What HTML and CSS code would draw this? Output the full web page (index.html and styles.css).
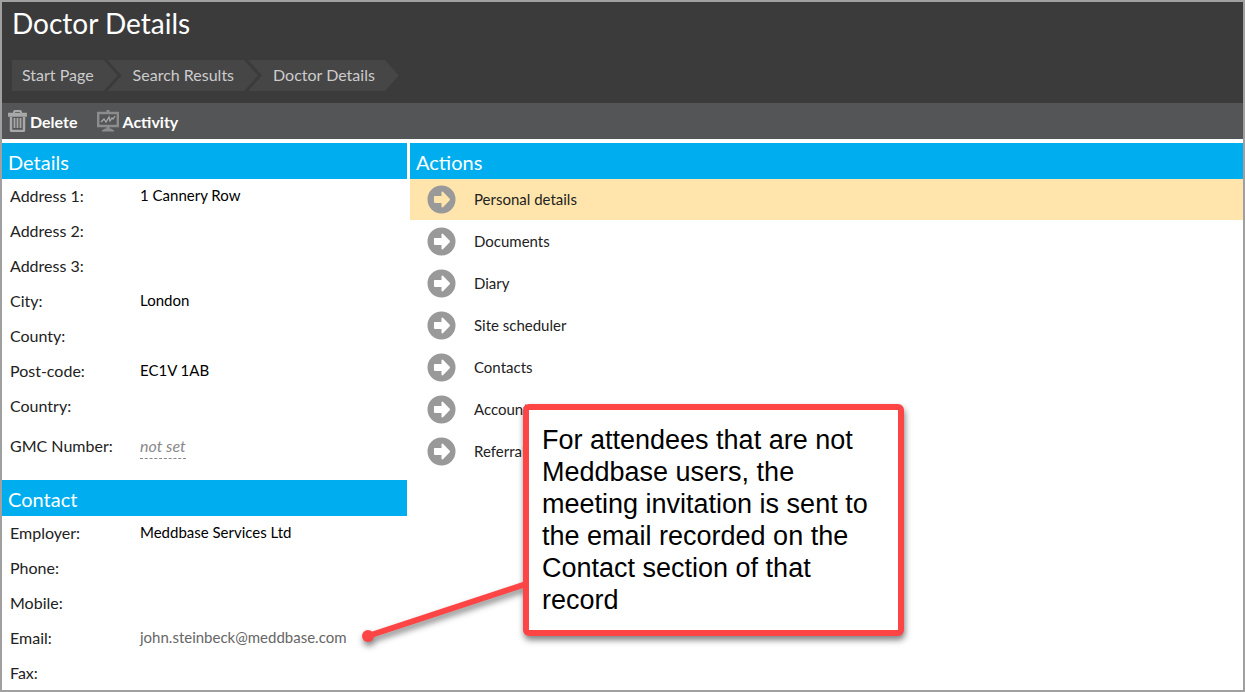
FILE: index.html
```
<!DOCTYPE html>
<html lang="en">
<head>
  <meta charset="UTF-8">
  <meta name="viewport" content="width=device-width, initial-scale=1.0">
  <title>Doctor Details</title>
  <link rel="stylesheet" href="styles.css">
</head>
<body>
  <svg class="symbols" aria-hidden="true">
    <symbol id="arrow" viewBox="0 0 30 30">
      <path fill="#999" fill-rule="evenodd" d="M15 .5a14.500 14.500 0 1 0 0 29a14.500 14.500 0 1 0 0-29zM8 11.500h7V7.500q.5-1 1.500-.5l7 7.200q.6.800 0 1.600l-7 7.200q-1 .5-1.500-.5v-4H8q-.8 0-.8-.8v-5.400q0-.8.800-.8z"/>
    </symbol>
  </svg>

  <div class="page">
    <header class="header">
      <h1>Doctor Details</h1>
      <nav class="breadcrumb">
        <a href="#">Start Page</a>
        <a href="#">Search Results</a>
        <a href="#">Doctor Details</a>
      </nav>
    </header>

    <div class="toolbar">
      <button type="button" class="tool">
        <svg width="19" height="22" viewBox="0 0 19 22" fill="none" stroke="#a8a8a9">
          <path d="M6 3V2q0-1 1-1h5q1 0 1 1v1" stroke-width="2"/>
          <path d="M.8 3.500h17.400v2.500H.8z" fill="#a8a8a9" stroke-width="1.500"/>
          <path d="M3 7v13q0 1 1 1h11q1 0 1-1V7" stroke-width="2.500"/>
          <path d="M6.500 8v10M9.500 8v10M12.500 8v10" stroke-width="1.800"/>
        </svg>
        Delete
      </button>
      <button type="button" class="tool">
        <svg width="22" height="22" viewBox="0 0 22 22" fill="none" stroke="#8c8c8d">
          <path d="M11 0v2M11 16v4" stroke-width="3"/>
          <path d="M1.200 3h19.600v13H1.200z" stroke-width="2.400"/>
          <path d="M5 21l3-2h6l3 2z" fill="#8c8c8d"/>
          <path d="M4 12l3-3 2 3 3-5 1 4 2-3 1 1 2-3" stroke="#a8a8a8" stroke-width="1.300"/>
        </svg>
        Activity
      </button>
    </div>

    <main class="content">
      <div class="left">
        <section class="panel">
          <h2>Details</h2>
          <dl class="fields">
            <div class="field"><dt>Address 1:</dt><dd>1 Cannery Row</dd></div>
            <div class="field"><dt>Address 2:</dt><dd></dd></div>
            <div class="field"><dt>Address 3:</dt><dd></dd></div>
            <div class="field"><dt>City:</dt><dd>London</dd></div>
            <div class="field"><dt>County:</dt><dd></dd></div>
            <div class="field"><dt>Post-code:</dt><dd>EC1V 1AB</dd></div>
            <div class="field"><dt>Country:</dt><dd></dd></div>
            <div class="field field-edit"><dt>GMC Number:</dt><dd><a href="#" class="not-set">not set</a></dd></div>
          </dl>
        </section>
        <section class="panel">
          <h2>Contact</h2>
          <dl class="fields">
            <div class="field"><dt>Employer:</dt><dd>Meddbase Services Ltd</dd></div>
            <div class="field"><dt>Phone:</dt><dd></dd></div>
            <div class="field"><dt>Mobile:</dt><dd></dd></div>
            <div class="field"><dt>Email:</dt><dd><a href="mailto:john.steinbeck@meddbase.com" class="email">john.steinbeck@meddbase.com</a></dd></div>
            <div class="field"><dt>Fax:</dt><dd></dd></div>
          </dl>
        </section>
      </div>

      <section class="panel">
        <h2>Actions</h2>
        <nav class="actions">
          <a href="#" class="action active"><svg class="arrow"><use href="#arrow"/></svg>Personal details</a>
          <a href="#" class="action"><svg class="arrow"><use href="#arrow"/></svg>Documents</a>
          <a href="#" class="action"><svg class="arrow"><use href="#arrow"/></svg>Diary</a>
          <a href="#" class="action"><svg class="arrow"><use href="#arrow"/></svg>Site scheduler</a>
          <a href="#" class="action"><svg class="arrow"><use href="#arrow"/></svg>Contacts</a>
          <a href="#" class="action"><svg class="arrow"><use href="#arrow"/></svg>Accounts</a>
          <a href="#" class="action"><svg class="arrow"><use href="#arrow"/></svg>Referrals</a>
        </nav>
      </section>
    </main>

    <aside class="callout">
      <svg class="callout-line" width="180" height="80" viewBox="0 0 180 80">
        <path d="M17 56L175 4" stroke="#fe4546" stroke-width="6"/>
        <circle cx="17" cy="56" r="6" fill="#fe4546"/>
      </svg>
      <p>For attendees that are not Meddbase users, the meeting invitation is sent to the email recorded on the Contact section of that record</p>
    </aside>
  </div>
</body>
</html>
```
FILE: styles.css
```
* {
  box-sizing: border-box;
}

body {
  margin: 0;
  font-family: Lato, sans-serif;
  font-size: 15px;
  color: #222;
  background-color: #fff;
}

h1, h2, p, dl, dd {
  margin: 0;
}

a {
  color: inherit;
  text-decoration: none;
}

.symbols {
  display: none;
}

.page {
  position: relative;
  height: 100vh;
  overflow: hidden;
  border: 2px solid #a0a0a0;
}

/* header */
.header {
  padding: 3px 10px 12px;
  background-color: #3b3b3c;
}

h1 {
  margin-bottom: 19px;
  font-size: 28px;
  font-weight: 400;
  line-height: 36px;
  color: #fff;
}

.breadcrumb {
  display: flex;
}

.breadcrumb a {
  padding: 0 24px 1px 25px;
  margin-right: -10px;
  font-size: 16px;
  line-height: 30px;
  color: #ccc;
  background-color: #464647;
  clip-path: polygon(0 0, calc(100% - 14px) 0, 100% 50%, calc(100% - 14px) 100%, 0 100%, 14px 50%);
}

.breadcrumb a:first-child {
  padding-left: 10px;
  clip-path: polygon(0 0, calc(100% - 14px) 0, 100% 50%, calc(100% - 14px) 100%, 0 100%);
}

/* toolbar */
.toolbar {
  display: flex;
  gap: 20px;
  height: 36px;
  padding: 0 6px;
  margin-bottom: 4px;
  background-color: #545556;
}

.tool {
  display: flex;
  align-items: center;
  gap: 3px;
  padding: 0;
  border: none;
  background: none;
  font-family: inherit;
  font-size: 16px;
  font-weight: 700;
  color: #fff;
  cursor: pointer;
}

/* panels */
.content {
  display: grid;
  grid-template-columns: 405px 1fr;
  gap: 3px;
}

.left {
  display: flex;
  flex-direction: column;
  gap: 10px;
}

h2 {
  padding: 2px 6px 0;
  font-size: 20px;
  font-weight: 400;
  line-height: 34px;
  color: #fff;
  background-color: #00aeef;
}

.field {
  display: grid;
  grid-template-columns: 130px 1fr;
  align-items: center;
  height: 35px;
  padding: 0 0 3px 8px;
}

.field-edit {
  height: 46px;
}

dt {
  font-size: 16px;
}

dd {
  color: #000;
}

.not-set {
  padding-bottom: 3px;
  border-bottom: 1px dashed #888;
  font-size: 16px;
  font-style: italic;
  color: #888;
}

.email {
  color: #666;
}

.actions {
  display: grid;
  gap: 1px;
}

.action {
  display: flex;
  align-items: center;
  gap: 18px;
  height: 41px;
  padding: 0 0 1px 17px;
}

.action.active {
  background-color: #ffe5ac;
}

.arrow {
  width: 29px;
  height: 29px;
}

/* note pointing at the email field */
.callout {
  position: absolute;
  top: 402px;
  left: 521px;
  width: 381px;
  padding: 14px 13px;
  border: 6px solid #fe4546;
  border-radius: 6px;
  background-color: #fff;
  font-family: "Liberation Sans", Arial, sans-serif;
  font-size: 27px;
  line-height: 32px;
  color: #000;
  filter: drop-shadow(1px 4px 3px rgba(0, 0, 0, 0.5));
}

.callout-line {
  position: absolute;
  top: 170px;
  left: -178px;
}
```
